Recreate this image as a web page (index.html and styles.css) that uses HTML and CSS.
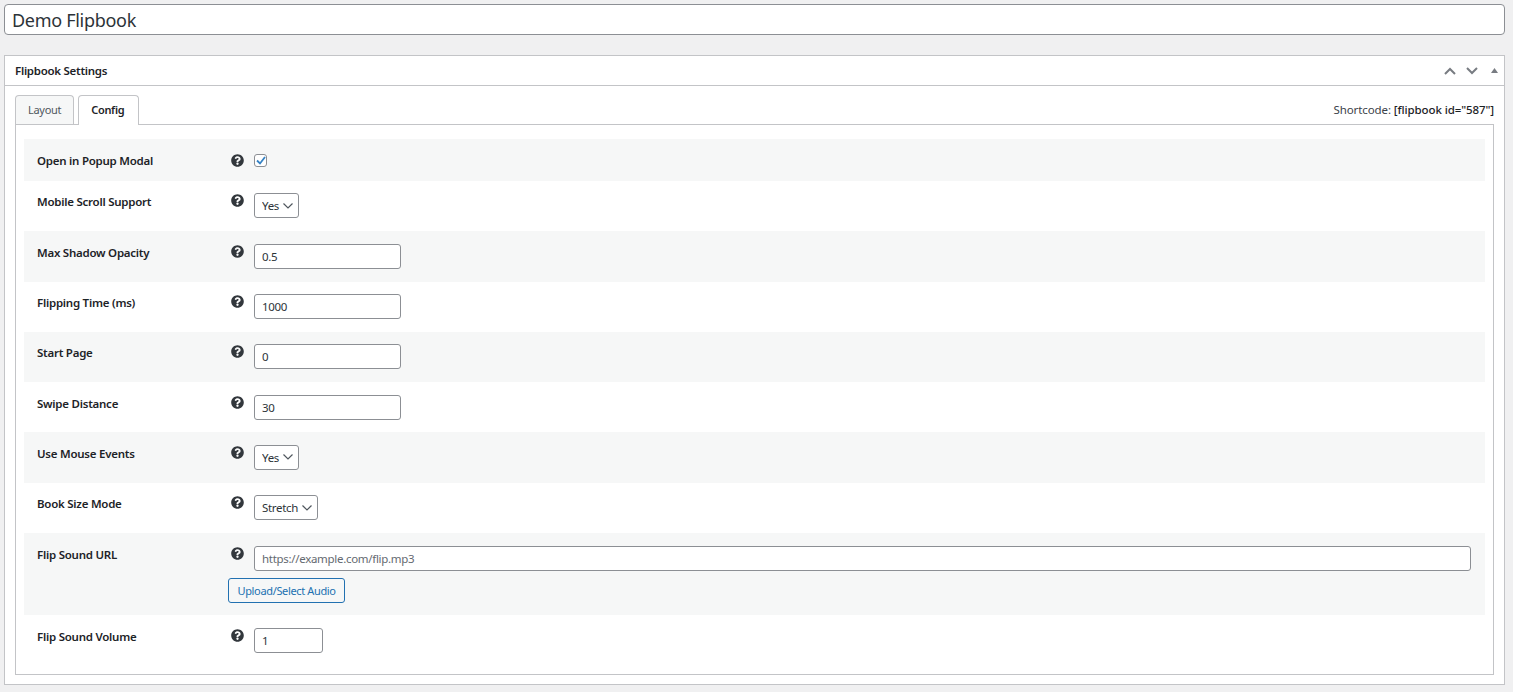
FILE: index.html
```html
<!DOCTYPE html>
<html lang="en">
<head>
  <meta charset="UTF-8"/>
  <meta name="viewport" content="width=device-width,initial-scale=1.0"/>
  <title>Edit Flipbook</title>
  <link rel="stylesheet" href="styles.css">
</head>
<body>
<svg class="defs" width="0" height="0" aria-hidden="true">
  <symbol id="help" viewBox="0 0 512 512"><path d="M504 256c0 136.997-111.043 248-248 248S8 392.997 8 256C8 119.083 119.043 8 256 8s248 111.083 248 248zM262.655 90c-54.497 0-89.255 22.957-116.549 63.758-3.536 5.286-2.353 12.415 2.715 16.258l34.699 26.31c5.205 3.947 12.621 3.008 16.665-2.122 17.864-22.658 30.113-35.797 57.303-35.797 20.429 0 45.698 13.148 45.698 32.958 0 14.976-12.363 22.667-32.534 33.976C247.128 238.528 216 254.941 216 296v4c0 6.627 5.373 12 12 12h56c6.627 0 12-5.373 12-12v-1.333c0-28.462 83.186-29.647 83.186-106.667 0-58.002-60.165-102-116.531-102zM256 338c-25.365 0-46 20.635-46 46 0 25.364 20.635 46 46 46s46-20.636 46-46c0-25.365-20.635-46-46-46z"/></symbol>
</svg>
<input class="title-input" type="text" value="Demo Flipbook">
<div class="postbox">
  <div class="postbox-header">
    <h2>Flipbook Settings</h2>
    <div class="handle-actions">
      <svg class="handle" width="12" height="8" viewBox="0 0 12 8"><path d="M1 7l5-5 5 5"/></svg>
      <svg class="handle" width="12" height="8" viewBox="0 0 12 8"><path d="M1 1l5 5 5-5"/></svg>
      <svg class="toggle" width="7" height="5" viewBox="0 0 7 5"><path d="M3.5 0L7 5H0z"/></svg>
    </div>
  </div>
  <div class="postbox-inside">
    <div class="tabs-bar">
      <a class="tab">Layout</a>
      <a class="tab active">Config</a>
      <span class="shortcode">Shortcode: <b>[flipbook id="587"]</b></span>
    </div>
    <div class="tab-panel">
      <div class="row row-short">
        <label class="row-label">Open in Popup Modal</label>
        <div class="row-field">
          <div class="field-line">
            <svg class="help"><use href="#help"/></svg>
            <span class="checkbox"><svg width="10" height="9" viewBox="0 0 10 9"><path d="M1 4.5l3 3 5-6.5"/></svg></span>
          </div>
        </div>
      </div>
      <div class="row">
        <label class="row-label">Mobile Scroll Support</label>
        <div class="row-field">
          <div class="field-line">
            <svg class="help"><use href="#help"/></svg>
            <select class="select"><option>Yes</option></select>
          </div>
        </div>
      </div>
      <div class="row">
        <label class="row-label">Max Shadow Opacity</label>
        <div class="row-field">
          <div class="field-line">
            <svg class="help"><use href="#help"/></svg>
            <input class="text" type="text" value="0.5">
          </div>
        </div>
      </div>
      <div class="row">
        <label class="row-label">Flipping Time (ms)</label>
        <div class="row-field">
          <div class="field-line">
            <svg class="help"><use href="#help"/></svg>
            <input class="text" type="text" value="1000">
          </div>
        </div>
      </div>
      <div class="row">
        <label class="row-label">Start Page</label>
        <div class="row-field">
          <div class="field-line">
            <svg class="help"><use href="#help"/></svg>
            <input class="text" type="text" value="0">
          </div>
        </div>
      </div>
      <div class="row">
        <label class="row-label">Swipe Distance</label>
        <div class="row-field">
          <div class="field-line">
            <svg class="help"><use href="#help"/></svg>
            <input class="text" type="text" value="30">
          </div>
        </div>
      </div>
      <div class="row">
        <label class="row-label">Use Mouse Events</label>
        <div class="row-field">
          <div class="field-line">
            <svg class="help"><use href="#help"/></svg>
            <select class="select"><option>Yes</option></select>
          </div>
        </div>
      </div>
      <div class="row">
        <label class="row-label">Book Size Mode</label>
        <div class="row-field">
          <div class="field-line">
            <svg class="help"><use href="#help"/></svg>
            <select class="select select-wide"><option>Stretch</option></select>
          </div>
        </div>
      </div>
      <div class="row row-tall">
        <label class="row-label">Flip Sound URL</label>
        <div class="row-field">
          <div class="field-line">
            <svg class="help"><use href="#help"/></svg>
            <input class="text text-full" type="text" placeholder="https://example.com/flip.mp3">
          </div>
          <button class="button" type="button">Upload/Select Audio</button>
        </div>
      </div>
      <div class="row">
        <label class="row-label">Flip Sound Volume</label>
        <div class="row-field">
          <div class="field-line">
            <svg class="help"><use href="#help"/></svg>
            <input class="text text-small" type="text" value="1">
          </div>
        </div>
      </div>
    </div>
  </div>
</div>
</body>
</html>
```
FILE: styles.css
```css
html, body { height: 100%; }
body { margin: 0; padding: 4px 8px 0 4px; box-sizing: border-box; background: #f0f0f1; color: #1d2327; font-family: "Noto Sans", sans-serif; font-size: 11.5px; overflow: hidden; }
.defs { position: absolute; }

input, select, button { font-family: inherit; box-sizing: border-box; margin: 0; }

.title-input { display: block; width: 100%; height: 31px; padding: 0 7px; font-size: 18px; letter-spacing: -0.3px; color: #2c3338; background: #fff; border: 1px solid #8c8f94; border-radius: 4px; }

.postbox { margin-top: 20px; height: 630px; box-sizing: border-box; background: #fff; border: 1px solid #c3c4c7; }
.postbox-header { display: flex; align-items: center; justify-content: space-between; height: 30px; box-sizing: border-box; padding: 0 6px 0 10px; border-bottom: 1px solid #c3c4c7; }
.postbox-header h2 { margin: 0; font-size: 11.5px; font-weight: 600; letter-spacing: -0.28px; }
.handle-actions { display: flex; align-items: center; gap: 10px; }
.handle { fill: none; stroke: #787c82; stroke-width: 2; }
.toggle { fill: #787c82; margin-left: 3px; }

.postbox-inside { padding: 9px 10px 0; }
.tabs-bar { display: flex; align-items: flex-end; gap: 4px; height: 29px; }
.tab { display: block; height: 29px; box-sizing: border-box; padding: 0 12px; line-height: 28px; font-size: 11px; letter-spacing: -0.3px; color: #50575e; background: #f6f7f7; border: 1px solid #c3c4c7; border-bottom: 0; border-radius: 4px 4px 0 0; }
.tab.active { position: relative; z-index: 1; height: 30px; margin-bottom: -1px; padding-right: 14px; font-weight: 600; color: #1d2327; background: #fff; }
.shortcode { margin-left: auto; align-self: center; letter-spacing: -0.1px; color: #3c434a; }
.shortcode b { font-weight: 500; color: #1d2327; }

.tab-panel { height: 551px; box-sizing: border-box; padding: 14px 8px 0; border: 1px solid #c3c4c7; }

.row { display: flex; padding: 12.45px 0; height: 50.28px; box-sizing: border-box; }
.row:nth-child(odd) { background: #f6f7f7; }
.row-short { height: 42px; padding-top: 13px; }
.row-short .field-line { padding-top: 1px; }
.row-tall { height: 82.4px; padding-top: 13px; }
.row-label { width: 204px; flex: none; padding-left: 13px; box-sizing: border-box; font-weight: 600; letter-spacing: -0.25px; line-height: 18px; }
.row-field { flex: 1; padding-right: 14px; }
.field-line { display: flex; align-items: flex-start; gap: 10px; padding-left: 3px; }
.help { width: 13px; height: 13px; flex: none; margin-top: 1px; fill: #32373c; }

.checkbox { display: flex; align-items: center; justify-content: center; width: 13px; height: 13px; box-sizing: border-box; margin-top: 1px; background: #fff; border: 1px solid #8c8f94; border-radius: 3px; }
.checkbox svg { fill: none; stroke: #3582c4; stroke-width: 1.8; }

.text { width: 147px; height: 25px; padding: 0 7px; font-size: 11.5px; letter-spacing: -0.3px; color: #2c3338; background: #fff; border: 1px solid #8c8f94; border-radius: 3px; }
.text::placeholder { color: #646970; opacity: 1; }
.text-full { flex: 1; }
.text-small { width: 69px; }

.select { width: 45px; height: 25px; padding: 0 16px 0 7px; font-size: 11.5px; letter-spacing: -0.3px; color: #2c3338; background: #fff url("data:image/svg+xml,%3Csvg xmlns='http://www.w3.org/2000/svg' width='10' height='6' viewBox='0 0 10 6'%3E%3Cpath d='M.5.5l4.5 4.5 4.5-4.5' fill='none' stroke='%2350575e' stroke-width='1.2'/%3E%3C/svg%3E") no-repeat right 5px center; border: 1px solid #8c8f94; border-radius: 3px; appearance: none; }
.select-wide { width: 64px; }

.button { display: block; height: 25px; margin-top: 7px; padding: 0 8.5px; font-size: 11px; letter-spacing: -0.35px; color: #2271b1; background: #f6f7f7; border: 1px solid #2271b1; border-radius: 3px; }
```
